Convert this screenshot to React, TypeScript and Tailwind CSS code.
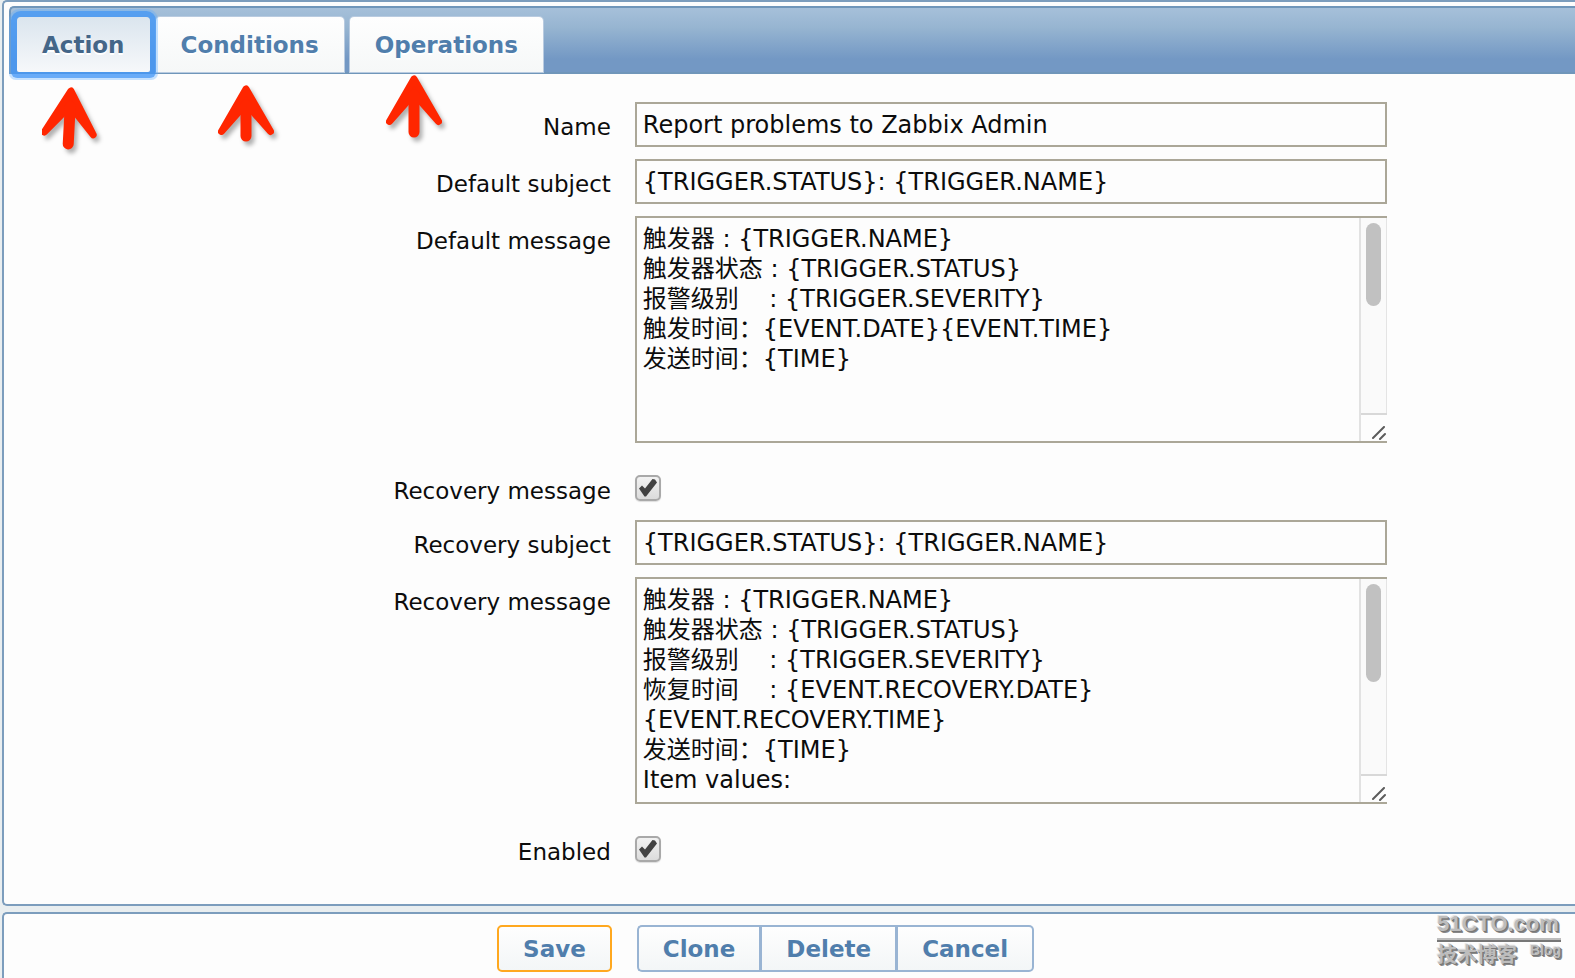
import { useState, type ReactNode } from 'react';
import { clsx } from 'clsx';

const TABS = ['Action', 'Conditions', 'Operations'];

const DEFAULT_MESSAGE = `触发器 : {TRIGGER.NAME}
触发器状态 : {TRIGGER.STATUS}
报警级别    : {TRIGGER.SEVERITY}
触发时间：{EVENT.DATE}{EVENT.TIME}
发送时间：{TIME}`;

const RECOVERY_MESSAGE = `触发器 : {TRIGGER.NAME}
触发器状态 : {TRIGGER.STATUS}
报警级别    : {TRIGGER.SEVERITY}
恢复时间    : {EVENT.RECOVERY.DATE}
{EVENT.RECOVERY.TIME}
发送时间：{TIME}
Item values:`;

interface RowProps {
  id: string;
  label: string;
  children: ReactNode;
  check?: boolean;
}

function Row({ id, label, children, check }: RowProps) {
  return (
    <div className={clsx('grid grid-cols-[2fr_3fr]', check && 'h-[53px] pt-5')}>
      <div className={clsx('pr-6 text-right', check ? 'pt-px' : 'pt-2.5')}>
        <label htmlFor={id}>{label}</label>
      </div>
      <div>{children}</div>
    </div>
  );
}

function TextInput({ id, value }: { id: string; value: string }) {
  return (
    <input
      id={id}
      type="text"
      defaultValue={value}
      className="block h-[45px] w-full max-w-[752px] border-2 border-[#aba798] bg-[#fdfdfd] px-1.5 text-2xl outline-none"
    />
  );
}

function MessageBox({ id, value, thumb }: { id: string; value: string; thumb: string }) {
  return (
    <div className="flex h-[227px] w-full max-w-[752px] border-2 border-r-0 border-[#aba798]">
      <textarea
        id={id}
        defaultValue={value}
        spellCheck={false}
        className="min-w-0 flex-1 resize-none overflow-hidden px-1.5 pt-1.5 text-[24px] leading-[30px] outline-none"
      />
      <div className="flex w-7 flex-col border-l-2 border-[#e2e2e2]">
        <div className="flex-1 border-r border-[#e4e4e4] bg-[#fafafa] px-[5px] pt-[5px]">
          <div className={clsx('w-[15px] rounded-full bg-[#c1c1c1]', thumb)} />
        </div>
        <div className="flex h-7 items-end justify-end border-t-2 border-[#d8d8d8] pr-px pb-px">
          <svg width="14" height="14" viewBox="0 0 14 14" stroke="#5c5c5c" strokeWidth="2" strokeLinecap="round">
            <path d="M1 12 12 1M8 13l5-5" />
          </svg>
        </div>
      </div>
    </div>
  );
}

function Checkbox({ id }: { id: string }) {
  return (
    <div className="relative size-[26px]">
      <input
        id={id}
        type="checkbox"
        defaultChecked
        className="peer block size-[26px] appearance-none rounded-[5px] border-2 border-[#a9a9a9] bg-linear-to-b from-[#f2f2f2] to-[#dcdcdc] shadow-[0_1px_1px_#dddddd]"
      />
      <svg
        className="pointer-events-none absolute inset-0 hidden peer-checked:block"
        width="26"
        height="26"
        viewBox="0 0 26 26"
        fill="#424242"
      >
        <path d="M4 13.500 7 10.500 10 13.500 17.500 4 20 4.500 22 7.500 11 21.500 9.500 21.500Z" />
      </svg>
    </div>
  );
}

interface ArrowProps {
  className: string;
  tilt?: boolean;
  short?: boolean;
}

function Arrow({ className, tilt, short }: ArrowProps) {
  return (
    <svg
      className={clsx('pointer-events-none absolute drop-shadow-[3px_4px_2px_rgba(0,0,0,0.3)]', className)}
      width="58"
      height="66"
      viewBox="0 0 58 66"
      fill="none"
      stroke="#ff2600"
      strokeLinecap="round"
      strokeLinejoin="round"
    >
      <g transform={tilt ? 'rotate(3 29 4)' : undefined}>
        <path fill="#ff2600" strokeWidth="7" d="M29 4 4.500 46.500 28 20 30 20 53.500 46.500Z" />
        <path strokeWidth="11" d={short ? 'M29 20V51' : 'M29 20V57'} />
      </g>
    </svg>
  );
}

function Watermark() {
  return (
    <div className="pointer-events-none absolute right-3.5 bottom-3 w-[124px] text-[#bdbdbd] [text-shadow:1px_1px_0_#777,2px_2px_0_#888,-1px_-1px_0_#e6e6e6]">
      <div className="font-['Liberation_Sans',sans-serif] text-[22px] leading-7 font-bold">51CTO.com</div>
      <div className="h-1 border-b-2 border-[#777] bg-[#bdbdbd]" />
      <div className="flex justify-between font-bold">
        <span className="font-['Noto_Sans_CJK_SC',sans-serif] text-[20px] leading-6">技术博客</span>
        <span className="font-['Liberation_Sans',sans-serif] text-sm leading-4">Blog</span>
      </div>
    </div>
  );
}

const buttonBase =
  'h-[47px] border-2 bg-linear-to-b from-[#fefefe] to-[#f3f6f7] px-6 font-bold text-[#507eac]';

export default function App() {
  const [tab, setTab] = useState('Action');

  return (
    <div
      lang="zh-CN"
      className="relative flex min-h-screen flex-col gap-[6px] overflow-hidden bg-[#e9eef0] pl-0.5 font-['DejaVu_Sans','Noto_Sans_CJK_SC',sans-serif] text-[23px] leading-[30px] text-[#0c0c0c]"
    >
      <form id="action-form" className="rounded-l-[5px] border-2 border-r-0 border-[#7c9dbd] bg-[#fdfdfd]">
        <div
          role="tablist"
          className="mt-1 ml-[5px] flex gap-1.5 rounded-tl-[5px] border-2 border-r-0 border-[#7096ba] bg-linear-to-b from-[#a6c0da] via-[#97b5d1] via-30% to-[#7398c4] to-80% pt-[9px] pl-1.5"
        >
          {TABS.map((name) => (
            <button
              key={name}
              type="button"
              role="tab"
              aria-selected={tab === name}
              onClick={() => setTab(name)}
              className={clsx(
                'h-[55px] rounded-t-[4px] px-[25px] font-bold [text-shadow:0_2px_0_#fff]',
                tab === name
                  ? 'z-10 rounded-[2px] bg-linear-to-b from-[#dbe5ee] to-[#f6f8fa] text-[#446688] shadow-[0_0_0_6px_rgba(64,148,245,0.7),0_0_0_8px_rgba(92,172,255,0.35)]'
                  : 'bg-linear-to-b from-[#fefefe] to-[#f6f8f8] text-[#507eac] shadow-[0_0_0_1px_#b9cbe0]',
              )}
            >
              {name}
            </button>
          ))}
        </div>

        <div className="flex flex-col gap-3 pt-7 pb-[35px] pl-1">
          <Row id="name" label="Name">
            <TextInput id="name" value="Report problems to Zabbix Admin" />
          </Row>
          <Row id="def-subject" label="Default subject">
            <TextInput id="def-subject" value="{TRIGGER.STATUS}: {TRIGGER.NAME}" />
          </Row>
          <Row id="def-message" label="Default message">
            <MessageBox id="def-message" value={DEFAULT_MESSAGE} thumb="h-[83px]" />
          </Row>
          <Row id="recovery" label="Recovery message" check>
            <Checkbox id="recovery" />
          </Row>
          <Row id="rec-subject" label="Recovery subject">
            <TextInput id="rec-subject" value="{TRIGGER.STATUS}: {TRIGGER.NAME}" />
          </Row>
          <Row id="rec-message" label="Recovery message">
            <MessageBox id="rec-message" value={RECOVERY_MESSAGE} thumb="h-[98px]" />
          </Row>
          <Row id="enabled" label="Enabled" check>
            <Checkbox id="enabled" />
          </Row>
        </div>
      </form>

      <div className="grid flex-1 grid-cols-[2fr_3fr] items-start rounded-tl-[5px] border-t-2 border-l-2 border-[#7c9dbd] bg-[#fdfdfd] pt-[11px] pb-1.5 pl-1">
        <div className="flex justify-end pr-[23px]">
          <button type="submit" form="action-form" className={clsx(buttonBase, 'rounded-[5px] border-[#ffa81f]')}>
            Save
          </button>
        </div>
        <div className="flex pl-0.5">
          <button type="button" className={clsx(buttonBase, 'rounded-l-[5px] border-r-0 border-[#99b4d3]')}>
            Clone
          </button>
          <button type="button" className={clsx(buttonBase, 'border-x-[3px] border-[#99b4d3]')}>
            Delete
          </button>
          <button type="button" className={clsx(buttonBase, 'rounded-r-[5px] border-l-0 border-[#99b4d3]')}>
            Cancel
          </button>
        </div>
      </div>

      <Arrow className="top-[87px] left-[42px]" tilt />
      <Arrow className="top-[85px] left-[217px]" short />
      <Arrow className="top-[75px] left-[385px]" />
      <Watermark />
    </div>
  );
}
